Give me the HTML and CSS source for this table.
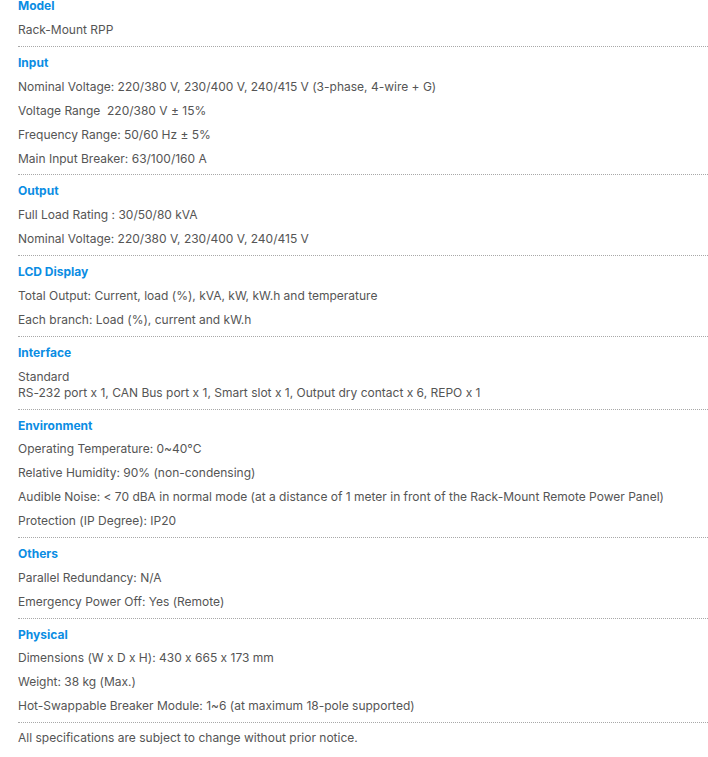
FILE: index.html
```html
<!DOCTYPE html>
<html lang="en">
<head>
<meta charset="utf-8">
<title>Rack-Mount RPP Specifications</title>
<link rel="stylesheet" href="styles.css">
</head>
<body>
<div class="specs">
  <section class="spec first">
    <h3 class="spec-title">Model</h3>
    <p class="spec-line">Rack-Mount RPP</p>
  </section>
  <section class="spec">
    <h3 class="spec-title">Input</h3>
    <p class="spec-line">Nominal Voltage: 220/380 V, 230/400 V, 240/415 V (3-phase, 4-wire + G)</p>
    <p class="spec-line">Voltage Range&nbsp; 220/380 V ± 15%</p>
    <p class="spec-line">Frequency Range: 50/60 Hz ± 5%</p>
    <p class="spec-line">Main Input Breaker: 63/100/160 A</p>
  </section>
  <section class="spec">
    <h3 class="spec-title">Output</h3>
    <p class="spec-line">Full Load Rating : 30/50/80 kVA</p>
    <p class="spec-line">Nominal Voltage: 220/380 V, 230/400 V, 240/415 V</p>
  </section>
  <section class="spec">
    <h3 class="spec-title">LCD Display</h3>
    <p class="spec-line">Total Output: Current, load (%), kVA, kW, kW.h and temperature</p>
    <p class="spec-line">Each branch: Load (%), current and kW.h</p>
  </section>
  <section class="spec">
    <h3 class="spec-title">Interface</h3>
    <p class="spec-block">Standard<br>RS-232 port x 1, CAN Bus port x 1, Smart slot x 1, Output dry contact x 6, REPO x 1</p>
  </section>
  <section class="spec">
    <h3 class="spec-title">Environment</h3>
    <p class="spec-line">Operating Temperature: 0~40°C</p>
    <p class="spec-line">Relative Humidity: 90% (non-condensing)</p>
    <p class="spec-line">Audible Noise: &lt; 70 dBA in normal mode (at a distance of 1 meter in front of the Rack-Mount Remote Power Panel)</p>
    <p class="spec-line">Protection (IP Degree): IP20</p>
  </section>
  <section class="spec">
    <h3 class="spec-title">Others</h3>
    <p class="spec-line">Parallel Redundancy: N/A</p>
    <p class="spec-line">Emergency Power Off: Yes (Remote)</p>
  </section>
  <section class="spec">
    <h3 class="spec-title">Physical</h3>
    <p class="spec-line">Dimensions (W x D x H): 430 x 665 x 173 mm</p>
    <p class="spec-line">Weight: 38 kg (Max.)</p>
    <p class="spec-line">Hot-Swappable Breaker Module: 1~6 (at maximum 18-pole supported)</p>
  </section>
  <p class="spec-note">All specifications are subject to change without prior notice.</p>
</div>
</body>
</html>
```
FILE: styles.css
```css
html, body {
  margin: 0;
  padding: 0;
  background: #ffffff;
}

body {
  font-family: Inter, "Liberation Sans", Arial, sans-serif;
  font-size: 12px;
  color: #555555;
  font-feature-settings: "calt" 0;
  overflow: hidden;
}

.specs {
  padding-left: 18px;
  margin-top: -9.75px;
}

.spec {
  padding: 4px 0;
  border-bottom: 1px dotted #a8a8a8;
}

.spec-title {
  margin: 0;
  font-size: 12px;
  line-height: 23.875px;
  font-weight: 700;
  color: #0b8de3;
}

.spec-line {
  margin: 0;
  line-height: 23.875px;
}

.spec-block {
  margin: 4px 0;
  line-height: 16px;
}

.spec-note {
  margin: 0;
  padding-top: 3px;
  line-height: 23.875px;
}
```
